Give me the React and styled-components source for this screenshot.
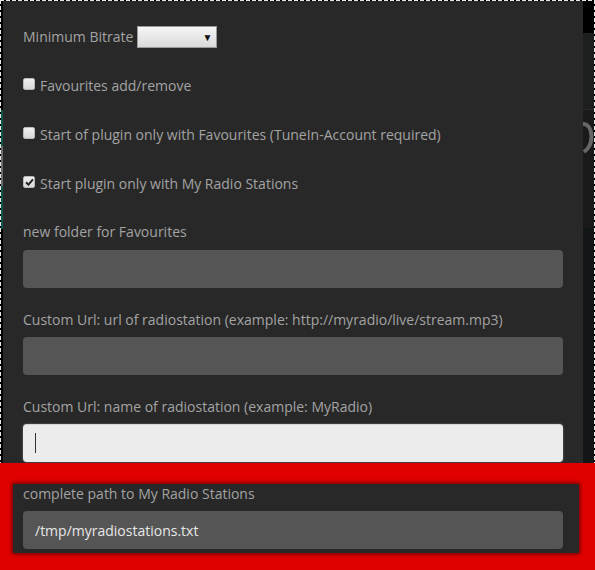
import React from "react";
import styled, { createGlobalStyle } from "styled-components";

const Global = createGlobalStyle`
  html, body { margin: 0; padding: 0; background: #000; }
  body { font-family: "Open Sans", "Noto Sans", Arial, sans-serif; overflow: hidden; }
`;

const Screen = styled.div`
  width: 595px;
  height: 570px;
  display: flex;
  flex-direction: column;
  overflow: hidden;
`;

const dashH = "repeating-linear-gradient(to right, #e8e8e8 0 4px, transparent 4px 6px)";
const dashV = "repeating-linear-gradient(to bottom, #e8e8e8 0 4px, transparent 4px 6px)";

const Stage = styled.div`
  height: 463px;
  box-sizing: border-box;
  display: flex;
  padding: 1px 1px 0 1px;
  background-color: #000;
  background-image: ${dashH}, ${dashV}, ${dashV};
  background-size: 100% 1px, 1px 100%, 1px 100%;
  background-position: left top, left top, right top;
  background-repeat: no-repeat;
  overflow: hidden;
`;

const LeftEdge = styled.div`
  width: 2px;
  flex: none;
  background: linear-gradient(
    to bottom,
    #000 0 109px,
    #0f554d 109px 145px,
    #6a6a6a 145px 185px,
    #0f554d 185px 228px,
    #000 228px
  );
`;

const Panel = styled.div`
  width: 580px;
  flex: none;
  box-sizing: border-box;
  background: #282828;
  padding: 11px 20px 0 20px;
  display: flex;
  flex-direction: column;
`;

const Backdrop = styled.div`
  flex: 1;
  display: flex;
  flex-direction: column;
`;

const BackdropBand = styled.div`
  height: ${(p) => p.$h}px;
  flex: ${(p) => (p.$h ? "none" : "1")};
  background: ${(p) => p.$bg};
  border-bottom: ${(p) => (p.$line ? "1px solid #2a2a2a" : "none")};
  overflow: hidden;
`;

const Row = styled.div`
  height: ${(p) => p.$h}px;
  display: flex;
  align-items: center;
  gap: ${(p) => p.$gap}px;
  color: #a3a3a3;
  font-size: 14px;
`;

const Select = styled.div`
  width: 80px;
  height: 22px;
  box-sizing: border-box;
  border: 1px solid #9a9a9a;
  background: linear-gradient(to bottom, #f6f6f6, #dadada);
  display: flex;
  align-items: center;
  justify-content: flex-end;
  padding-right: 4px;
  font-size: 10px;
  line-height: 1;
  color: #111;
`;

const Box = styled.span`
  width: 12px;
  height: 12px;
  box-sizing: border-box;
  border: 1px solid #b9b9b9;
  border-radius: 2px;
  background: linear-gradient(to bottom, #f0f0f0, #d8d8d8);
  display: flex;
  align-items: center;
  justify-content: center;
  margin-top: -3px;
`;

const Label = styled.div`
  color: #a3a3a3;
  font-size: 14px;
  line-height: 20px;
  margin-top: ${(p) => p.$top || 0}px;
  margin-bottom: ${(p) => p.$bottom}px;
`;

const Field = styled.div`
  height: 38px;
  box-sizing: border-box;
  border-radius: 4px;
  background: ${(p) => (p.$light ? "#ececec" : "#555555")};
  box-shadow: ${(p) =>
    p.$light ? "0 0 2px rgba(255,255,255,0.4), inset 0 1px 1px rgba(0,0,0,0.1)" : "none"};
  display: flex;
  align-items: center;
  padding-left: 12px;
  color: #e8e8e8;
  font-size: 14px;
`;

const Caret = styled.span`
  width: 1px;
  height: 20px;
  background: #333;
`;

const Highlight = styled.div`
  flex: 1;
  background: #e00000;
  padding: 21px 16px 17px 13px;
  display: flex;
`;

const Card = styled.div`
  flex: 1;
  background: #282828;
  box-shadow: 0 0 4px 1px rgba(0, 0, 0, 0.55);
  padding: 0 16px 4px 10px;
  display: flex;
  flex-direction: column;
`;

const Check = () => (
  <svg width="9" height="8" viewBox="0 0 9 8">
    <path d="M1 4.2 L3.4 6.6 L8 1.4" fill="none" stroke="#222" strokeWidth="2" />
  </svg>
);

const Arc = () => (
  <svg width="11" height="50" viewBox="0 0 11 50">
    <path d="M0 14 C 10 14, 12 34, 1 42" fill="none" stroke="#666" strokeWidth="4" />
  </svg>
);

export default function App() {
  return (
    <>
      <Global />
      <Screen>
        <Stage>
          <LeftEdge />
          <Panel>
            <Row $h={49} $gap={4}>
              <span>Minimum Bitrate</span>
              <Select>▼</Select>
            </Row>
            <Row $h={49} $gap={5}>
              <Box />
              <span>Favourites add/remove</span>
            </Row>
            <Row $h={48} $gap={5}>
              <Box />
              <span>Start of plugin only with Favourites (TuneIn-Account required)</span>
            </Row>
            <Row $h={50} $gap={5}>
              <Box>
                <Check />
              </Box>
              <span>Start plugin only with My Radio Stations</span>
            </Row>
            <Label $top={14} $bottom={8}>new folder for Favourites</Label>
            <Field />
            <Label $top={22} $bottom={7}>
              Custom Url: url of radiostation (example: http://myradio/live/stream.mp3)
            </Label>
            <Field />
            <Label $top={22} $bottom={7}>
              Custom Url: name of radiostation (example: MyRadio)
            </Label>
            <Field $light>
              <Caret />
            </Field>
          </Panel>
          <Backdrop>
            <BackdropBand $h={32} $bg="#000" />
            <BackdropBand $h={76} $bg="#1d1f1f" $line />
            <BackdropBand $h={118} $bg="#1a1a1a">
              <Arc />
            </BackdropBand>
            <BackdropBand $bg="#121616" />
          </Backdrop>
        </Stage>
        <Highlight>
          <Card>
            <Label $bottom={7}>complete path to My Radio Stations</Label>
            <Field>/tmp/myradiostations.txt</Field>
          </Card>
        </Highlight>
      </Screen>
    </>
  );
}
